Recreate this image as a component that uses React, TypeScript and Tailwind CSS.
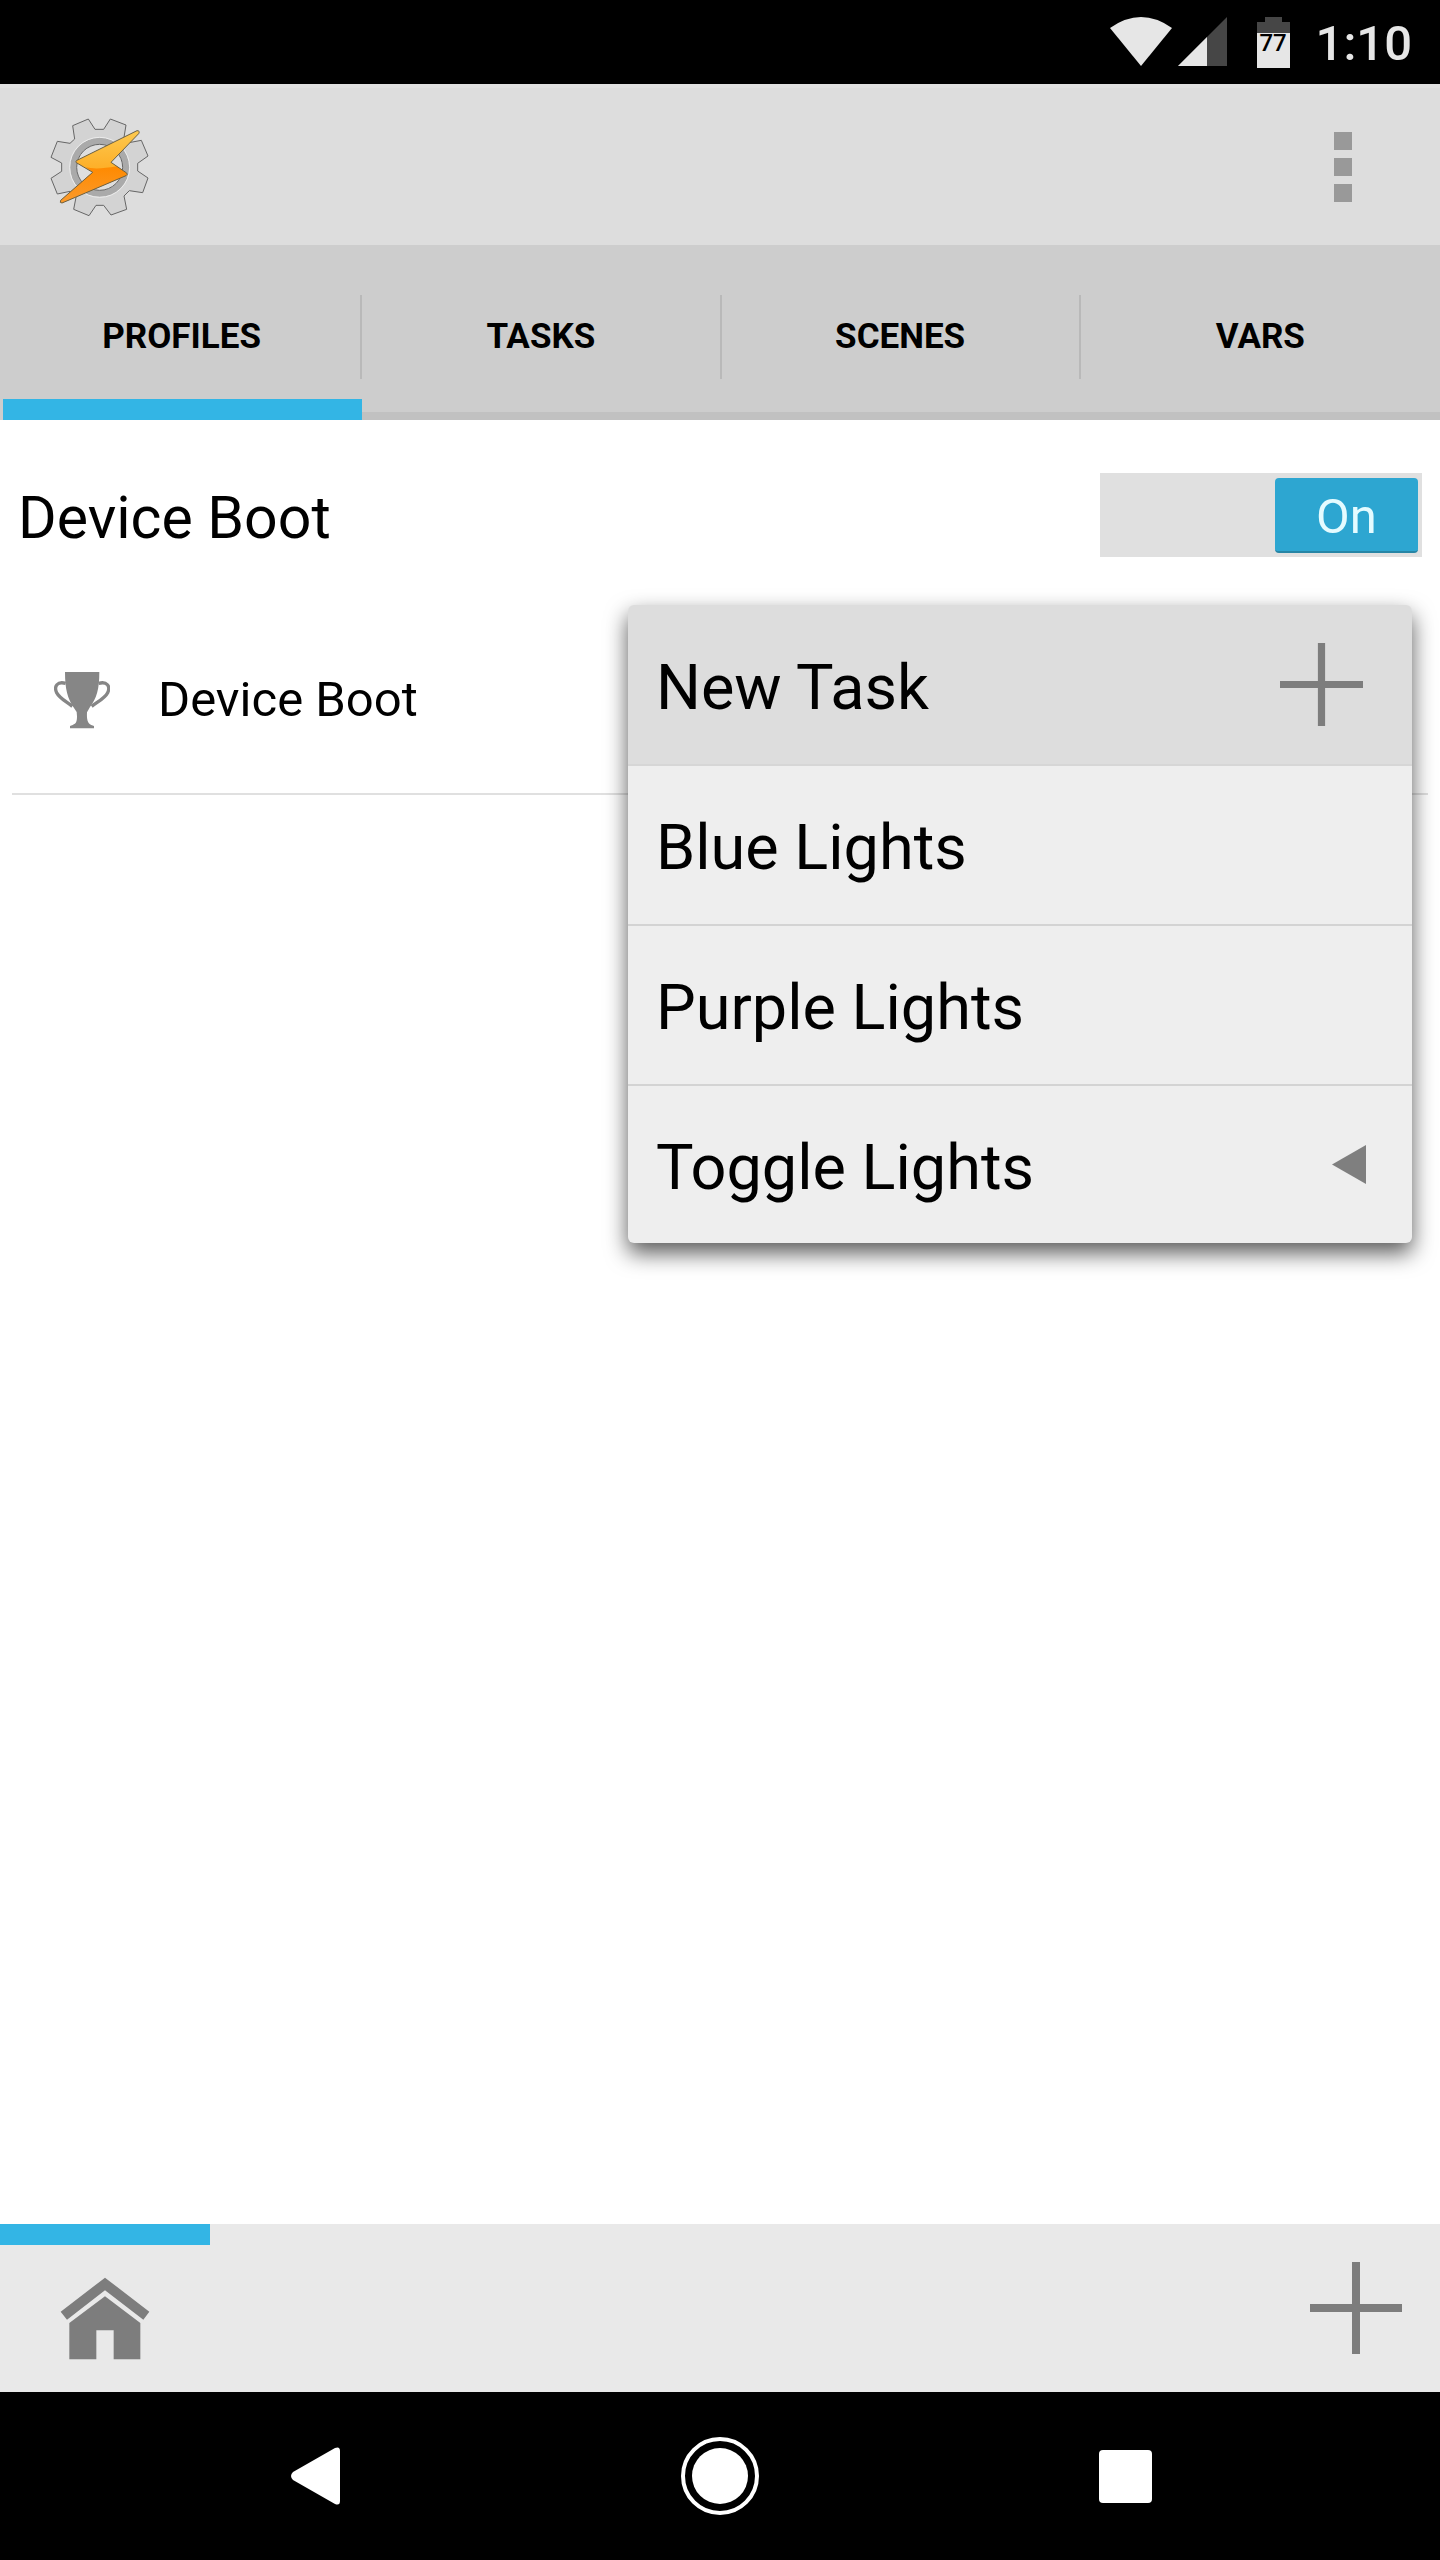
import { useState } from "react";
import { twMerge } from "tailwind-merge";

const tabs = ["PROFILES", "TASKS", "SCENES", "VARS"];
const tasks = ["Blue Lights", "Purple Lights", "Toggle Lights"];

interface PlusIconProps {
  className?: string;
}

const PlusIcon = ({ className }: PlusIconProps) => (
  <svg viewBox="0 0 92 92" className={className} fill="#7d7d7d" aria-hidden="true">
    <path d="M42 0h8v42h42v8H50v42h-8V50H0v-8h42z" />
  </svg>
);

const TaskerLogo = () => (
  <svg width={100} height={100} viewBox="150 111 300 300" aria-hidden="true">
    <defs>
      <linearGradient id="boltTop" x1="0" y1="0" x2="0" y2="1">
        <stop offset="0" stopColor="#fdc94f" />
        <stop offset="0.5" stopColor="#fdb02a" />
      </linearGradient>
      <linearGradient id="boltBottom" x1="0" y1="0" x2="0" y2="1">
        <stop offset="0" stopColor="#ff8a00" />
        <stop offset="1" stopColor="#fb9a2c" />
      </linearGradient>
    </defs>
    <path
      d="M218 137L265 117L285 148H311L331 117L378 135L372 172L387 188L424 181L444 228L413 250V273L444 294L428 338L388 332L372 348L380 388L333 405L311 376H288L267 407L221 388L228 352L210 334L172 342L153 295L185 274V249L153 232L172 184L210 190L224 177Z"
      fill="#d3d3d3"
      stroke="#666"
      strokeWidth={3}
      strokeLinejoin="round"
    />
    <circle cx={299} cy={262} r={79} fill="#dedede" stroke="#aaa" strokeWidth={19} />
    <circle cx={299} cy={262} r={90} fill="none" stroke="#ececec" strokeWidth={3} />
    <circle cx={299} cy={262} r={69} fill="#dedede" stroke="#666" strokeWidth={3} />
    <path
      d="M411 152Q421 152 416 161L333 247L380 279Q384 284 378 287L186 369Q178 369 182 361L278 277L229 248Q225 244 231 241Z"
      fill="url(#boltTop)"
    />
    <path d="M257 262Q290 270 350 259L380 279Q384 284 378 287L186 369Q178 369 182 361L278 277Z" fill="url(#boltBottom)" />
    <path
      d="M411 152Q421 152 416 161L333 247L380 279Q384 284 378 287L186 369Q178 369 182 361L278 277L229 248Q225 244 231 241Z"
      fill="none"
      stroke="#6b6044"
      strokeWidth={3}
      strokeLinejoin="round"
    />
  </svg>
);

const TrophyIcon = () => (
  <svg width={56} height={58} viewBox="162 634 168 174" fill="#868686" aria-hidden="true">
    <path d="M195 637H298C298 690 290 715 270 742L261 758C260 778 262 792 274 796L282 799V806H210V799L218 796C229 792 231 785 231 770L230 757L220 742C203 715 195 690 195 637Z" />
    <path
      d="M197 671C172 664 161 680 170 699C178 715 198 725 217 740M296 671C321 664 332 680 323 699C315 715 295 725 275 740"
      fill="none"
      stroke="#868686"
      strokeWidth={10}
    />
  </svg>
);

const HomeIcon = () => (
  <svg width={90} height={84} viewBox="182 227 270 252" fill="#7d7d7d" aria-hidden="true">
    <path d="M317 229L450 331L432 355L317 267L203 355L184 331Z" />
    <path d="M317 285L423 365V474H343V387H291V474H210V365Z" />
  </svg>
);

const StatusBar = () => (
  <div className="flex h-[84px] items-center justify-end bg-black pr-7 text-[#e6e6e6]">
    <svg width={62} height={50} viewBox="0 0 62 50" fill="#e6e6e6" aria-label="Wi-Fi">
      <path d="M0 11Q31 -11 62 11L31 49Z" />
    </svg>
    <svg width={50} height={50} viewBox="0 0 50 50" className="ml-1.5" aria-label="Signal">
      <path d="M49 0V49H0Z" fill="#464646" />
      <path d="M29 20V49H0Z" fill="#e6e6e6" />
    </svg>
    <div className="relative ml-[29px] h-[51px] w-[33px]">
      <svg width={33} height={51} viewBox="0 0 33 51" aria-hidden="true">
        <path d="M8 0H25V5H33V16H0V5H8Z" fill="#464646" />
        <path d="M0 16H33V51H0Z" fill="#e6e6e6" />
      </svg>
      <span className="absolute inset-x-0 top-4 text-center text-[24px] leading-[20px] font-medium text-black">77</span>
    </div>
    <span className="ml-[26px] pt-1 text-[49px] leading-[60px] font-medium">1:10</span>
  </div>
);

export default function App() {
  const [activeTab, setActiveTab] = useState("PROFILES");
  const [enabled, setEnabled] = useState(true);

  return (
    <div className="flex min-h-screen flex-col bg-white font-[Roboto,sans-serif] text-black">
      <StatusBar />

      {/* ACTION BAR */}
      <header className="flex h-[161px] items-center justify-between border-t-4 border-[#e1e1e1] bg-[#dddddd] pr-[88px] pl-[50px]">
        <TaskerLogo />
        <button aria-label="More options" className="flex flex-col gap-2">
          <span className="size-[18px] bg-[#999999]" />
          <span className="size-[18px] bg-[#999999]" />
          <span className="size-[18px] bg-[#999999]" />
        </button>
      </header>

      <nav className="grid grid-cols-4 bg-[#cdcdcd] pl-[3px]">
        {tabs.map((tab, i) => (
          <button
            key={tab}
            onClick={() => setActiveTab(tab)}
            className="relative flex h-[175px] items-center pt-2 text-[35px] leading-[44px] font-bold"
          >
            <span
              className={twMerge(
                "flex h-[84px] flex-1 items-center justify-center border-r-2 border-[#b9b9b9]",
                i === tabs.length - 1 && "border-r-0"
              )}
            >
              {tab}
            </span>
            <span
              className={twMerge(
                "absolute inset-x-0 bottom-0 h-2 bg-[#c1c1c1]",
                activeTab === tab && "h-[21px] bg-[#33b5e5]"
              )}
            />
          </button>
        ))}
      </nav>

      <main className="relative flex-1">
        <div className="mx-3 border-b-2 border-[#e0e0e0]">
          <div className="flex h-[190px] items-center justify-between px-1.5">
            <h1 className="pt-1.5 text-[59px] leading-[72px]">Device Boot</h1>
            <label className="flex h-[84px] w-[322px] cursor-pointer items-center justify-end bg-[#e0e0e0] px-1">
              <input
                type="checkbox"
                aria-label="Device Boot"
                checked={enabled}
                onChange={() => setEnabled(!enabled)}
                className="peer sr-only"
              />
              <span className="flex h-[75px] w-[143px] items-center justify-center rounded-sm border-b-2 border-[#2785a5] bg-[#2da6d1] pt-1.5 text-[49px] leading-[56px] text-[#e4fbff] peer-[:not(:checked)]:mr-auto peer-[:not(:checked)]:bg-[#999999]">
                {enabled ? "On" : "Off"}
              </span>
            </label>
          </div>
          <div className="flex h-[183px] items-center gap-12 pb-1 pl-[42px]">
            <TrophyIcon />
            <span className="text-[49px] leading-[56px]">Device Boot</span>
          </div>
        </div>

        {/* TASK MENU */}
        <div
          role="menu"
          className="absolute top-[185px] right-7 w-[784px] overflow-hidden rounded-md bg-[#eeeeee] text-[63px] leading-[76px] shadow-[0_10px_22px_rgba(0,0,0,0.65)]"
        >
          <button
            role="menuitem"
            className="flex h-[161px] w-full items-center justify-between border-b-2 border-[#d6d6d6] bg-[#dddddd] pr-[49px] pl-7"
          >
            <span className="pt-1.5">New Task</span>
            <PlusIcon className="size-[83px]" />
          </button>
          {tasks.map((task, i) => (
            <button
              key={task}
              role="menuitem"
              className={twMerge(
                "flex h-[160px] w-full items-center justify-between border-b-2 border-[#d3d3d3] pr-[46px] pl-7",
                i === tasks.length - 1 && "h-[157px] border-b-0"
              )}
            >
              <span className="pt-1.5">{task}</span>
              {task === "Toggle Lights" && (
                <svg width={34} height={39} viewBox="0 0 34 39" fill="#7f7f7f" aria-hidden="true">
                  <path d="M34 0V39L0 19.5Z" />
                </svg>
              )}
            </button>
          ))}
        </div>
      </main>

      <footer className="flex h-[168px] items-center justify-between bg-[#e9e9e9] pr-[38px]">
        <button
          aria-label="Home"
          className="flex h-full w-[210px] items-center justify-center border-t-[21px] border-[#33b5e5]"
        >
          <HomeIcon />
        </button>
        <button aria-label="Add profile">
          <PlusIcon className="size-[92px]" />
        </button>
      </footer>

      {/* SYSTEM NAVIGATION */}
      <div className="grid h-[168px] grid-cols-3 bg-black px-[112px]">
        <button aria-label="Back" className="flex items-center justify-center">
          <svg width={50} height={58} viewBox="0 0 50 58" fill="#fff">
            <path d="M45 1Q50 -1 50 4V54Q50 59 45 57L3 33Q-1 29 3 25Z" />
          </svg>
        </button>
        <button aria-label="Home screen" className="flex items-center justify-center">
          <svg width={78} height={78} viewBox="0 0 78 78">
            <circle cx={39} cy={39} r={37} fill="none" stroke="#fff" strokeWidth={4} />
            <circle cx={39} cy={39} r={28} fill="#fff" />
          </svg>
        </button>
        <button aria-label="Recent apps" className="flex items-center justify-center">
          <span className="size-[53px] rounded-sm bg-white" />
        </button>
      </div>
    </div>
  );
}
